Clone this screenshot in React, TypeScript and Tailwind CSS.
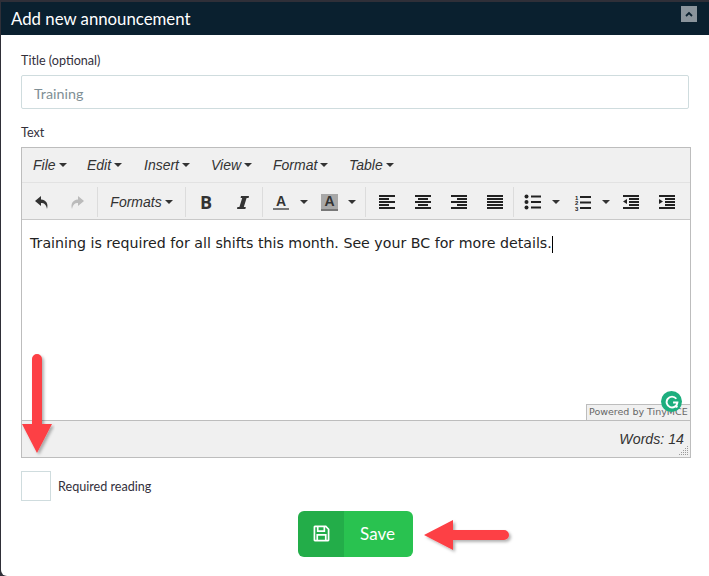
import React from "react";

const Caret = ({ className = "" }: { className?: string }) => (
  <span className={`inline-block w-0 h-0 border-l-[4px] border-r-[4px] border-t-[4px] border-l-transparent border-r-transparent border-t-[#333] ${className}`} />
);

const Lines = ({ rows }: { rows: [number, number][] }) => (
  <svg width="18" height="16" viewBox="0 0 18 16" fill="#222">
    {rows.map(([x, w], i) => (
      <rect key={i} x={x} y={1 + i * 3} width={w} height="2" />
    ))}
  </svg>
);

const Sep = () => <div className="w-px h-[30px] bg-[#dcdcdc]" />;

const menu: [string, string][] = [
  ["File", "w-[54px]"],
  ["Edit", "w-[57px]"],
  ["Insert", "w-[67px]"],
  ["View", "w-[62px]"],
  ["Format", "w-[76px]"],
  ["Table", "w-[60px]"],
];

export default function App() {
  return (
    <div className="relative w-[709px] h-[576px] overflow-hidden bg-[#2f2f38] pt-[2px] pl-px font-['Lato',sans-serif]">
      <div className="h-[33px] bg-[#0a202f] flex items-start justify-between pl-[10px] pr-[12px]">
        <span className="text-white text-[16.8px] leading-[34px]">Add new announcement</span>
        <div className="mt-[4px] w-4 h-4 bg-[#8a949c] flex items-center justify-center">
          <svg width="8" height="6" viewBox="0 0 8 6" fill="none" stroke="#0a202f" strokeWidth="1.8">
            <path d="M1 5l3-3 3 3" />
          </svg>
        </div>
      </div>

      <div className="h-[541px] bg-white rounded-bl-[6px] pl-5 pr-[18px] pt-[17px]">
        <div className="text-[12.6px] leading-[17px] text-[#33303c] h-[23px]">Title (optional)</div>
        <div className="w-[668px] h-[34px] border border-[#cfdcde] rounded-[2px] flex items-center pl-[12px] pt-[3px] text-[14.3px] text-[#7f8f96]">
          Training
        </div>
        <div className="mt-[15px] text-[12.6px] leading-[17px] h-[23px] text-[#33303c]">Text</div>

        <div className="w-[670px] h-[311px] border border-[#bdbdbd] flex flex-col font-['Liberation_Sans',sans-serif]">
          <div className="h-[35px] bg-[#f0f0f0] border-b border-[#e2e2e2] flex items-center pl-[11px] italic text-[14px] text-[#333]">
            {menu.map(([m, w]) => (
              <div key={m} className={`${w} flex items-center gap-[3px]`}>
                <span>{m}</span>
                <Caret />
              </div>
            ))}
          </div>

          <div className="h-[37px] bg-[#f0f0f0] border-b border-[#c9c9c9] flex items-center pt-[2px]">
            <div className="w-[37px] flex justify-center pl-[2px]">
              <svg width="16" height="15" viewBox="0 0 16 15" fill="#333">
                <path d="M7 1L1 6l6 5V8c3 0 5 1 6 6 1.500-5-.5-9-6-9.500z" />
              </svg>
            </div>
            <div className="w-[38px] flex justify-center pr-[2px]">
              <svg width="16" height="15" viewBox="0 0 16 15" fill="#bbb">
                <path d="M9 1l6 5-6 5V8c-3 0-5 1-6 6-1.500-5 .5-9 6-9.500z" />
              </svg>
            </div>
            <Sep />
            <div className="w-[87px] flex items-center justify-center gap-[3px] italic text-[14px] text-[#333]">
              <span>Formats</span>
              <Caret />
            </div>
            <Sep />
            <div className="w-[40px] text-center font-bold text-[18px] text-[#333] font-['Open_Sans',sans-serif]">B</div>
            <div className="w-[36px] flex justify-center pr-[2px]">
              <svg width="14" height="15" viewBox="0 0 14 15" fill="#333">
                <path d="M5 1h8l-.4 2h-2L7.800 12h2l-.4 2H1l.4-2h2L6.200 3h-1.600z" />
              </svg>
            </div>
            <Sep />
            <div className="w-[49px] flex items-center pl-[10px] gap-[11px]">
              <div className="w-4 text-center text-[14px] font-bold leading-[14px] text-[#333] border-b-[2px] border-[#777]">A</div>
              <Caret />
            </div>
            <div className="w-[53px] flex items-center pl-[9px] gap-[10px]">
              <div className="w-[17px] h-[17px] bg-[#a8a8a8] border-b-[2px] border-[#777] text-center text-[14px] font-bold leading-[15px] text-[#333]">A</div>
              <Caret />
            </div>
            <Sep />
            <div className="w-[36px] ml-[3px] flex justify-center"><Lines rows={[[1, 16], [1, 10], [1, 16], [1, 10], [1, 16]]} /></div>
            <div className="w-[36px] flex justify-center"><Lines rows={[[1, 16], [4, 10], [1, 16], [4, 10], [1, 16]]} /></div>
            <div className="w-[36px] flex justify-center"><Lines rows={[[1, 16], [7, 10], [1, 16], [7, 10], [1, 16]]} /></div>
            <div className="w-[36px] flex justify-center"><Lines rows={[[1, 16], [1, 16], [1, 16], [1, 16], [1, 16]]} /></div>
            <Sep />
            <div className="w-[50px] flex items-center pl-[10px] gap-[5px]">
              <svg width="18" height="16" viewBox="0 0 18 16" fill="#222">
                <circle cx="2.500" cy="2.500" r="2" /><circle cx="2.500" cy="8" r="2" /><circle cx="2.500" cy="13.500" r="2" />
                <rect x="7" y="1.500" width="10" height="2" /><rect x="7" y="7" width="10" height="2" /><rect x="7" y="12.500" width="10" height="2" />
              </svg>
              <Caret className="ml-[5px]" />
            </div>
            <div className="w-[49px] flex items-center pl-[10px] gap-[5px]">
              <svg width="18" height="17" viewBox="0 0 18 17" fill="#222">
                <text x="1" y="5.500" fontSize="6" fontWeight="bold" fontFamily="Liberation Sans">1</text>
                <text x="1" y="11" fontSize="6" fontWeight="bold" fontFamily="Liberation Sans">2</text>
                <text x="1" y="16.500" fontSize="6" fontWeight="bold" fontFamily="Liberation Sans">3</text>
                <rect x="6" y="2" width="11" height="2" /><rect x="6" y="7.500" width="11" height="2" /><rect x="6" y="13" width="11" height="2" />
              </svg>
              <Caret className="ml-[5px]" />
            </div>
            <div className="w-[36px] flex justify-center">
              <svg width="18" height="16" viewBox="0 0 18 16" fill="#222">
                <rect x="1" y="1" width="16" height="2" /><rect x="7" y="4" width="10" height="2" /><rect x="7" y="7" width="10" height="2" /><rect x="7" y="10" width="10" height="2" /><rect x="1" y="13" width="16" height="2" />
                <path d="M5 5v5L1 7.500z" />
              </svg>
            </div>
            <div className="w-[36px] flex justify-center">
              <svg width="18" height="16" viewBox="0 0 18 16" fill="#222">
                <rect x="1" y="1" width="16" height="2" /><rect x="7" y="4" width="10" height="2" /><rect x="7" y="7" width="10" height="2" /><rect x="7" y="10" width="10" height="2" /><rect x="1" y="13" width="16" height="2" />
                <path d="M1 5v5l4-2.500z" />
              </svg>
            </div>
          </div>

          <div className="relative flex-1 bg-white pl-2 pt-[13px] font-['DejaVu_Sans',sans-serif] text-[14.2px] leading-[20px] text-[#222] whitespace-nowrap">
            Training is required for all shifts this month. See your BC for more details.<span className="inline-block w-px h-[17px] bg-black align-middle" />
            <div className="absolute right-0 bottom-0 w-[104px] h-[16px] bg-[#f0f0f0] border-l border-t border-[#bdbdbd] pl-[2px] text-[9.5px] leading-[14px] text-[#666]">
              Powered by TinyMCE
            </div>
            <div className="absolute right-[8px] bottom-[8px] w-[21px] h-[21px] rounded-full bg-[#1dae7e] flex items-center justify-center">
              <svg width="14" height="14" viewBox="0 0 13 13" fill="none" stroke="white" strokeWidth="1.800">
                <path d="M10.500 3.500A5 5 0 1 0 11.500 7H7.500M9.500 9.500l2 2" />
              </svg>
            </div>
          </div>

          <div className="relative h-[37px] bg-[#f0f0f0] border-t border-[#bdbdbd] flex items-end justify-end pr-[6px] pb-[11px] italic text-[14.2px] leading-none text-[#333]">
            Words: 14
            <svg className="absolute right-[1px] bottom-[1px]" width="10" height="10" viewBox="0 0 10 10" fill="#9a9a9a">
              <rect x="8" y="0" width="1" height="1" /><rect x="6" y="2" width="1" height="1" /><rect x="8" y="2" width="1" height="1" />
              <rect x="4" y="4" width="1" height="1" /><rect x="6" y="4" width="1" height="1" /><rect x="8" y="4" width="1" height="1" />
              <rect x="2" y="6" width="1" height="1" /><rect x="4" y="6" width="1" height="1" /><rect x="6" y="6" width="1" height="1" /><rect x="8" y="6" width="1" height="1" />
              <rect x="0" y="8" width="1" height="1" /><rect x="2" y="8" width="1" height="1" /><rect x="4" y="8" width="1" height="1" /><rect x="6" y="8" width="1" height="1" /><rect x="8" y="8" width="1" height="1" />
            </svg>
          </div>
        </div>

        <div className="mt-[13px] flex items-center gap-[7px]">
          <div className="w-[30px] h-[30px] border border-[#cfdcde]" />
          <span className="text-[12.6px] pt-[3px] text-[#33303c]">Required reading</span>
        </div>

        <div className="mt-[10px] ml-[277px] w-[115px] h-[46px] rounded-[6px] overflow-hidden flex text-white">
          <div className="w-[46px] bg-[#23ad49] flex items-center justify-center pb-[2px]">
            <svg width="17" height="17" viewBox="0 0 18 18" fill="none" stroke="white" strokeWidth="1.800">
              <path d="M2 1.500h11.500l3 3V16a.5.5 0 0 1-.5.5H2a.5.5 0 0 1-.5-.5V2A.5.5 0 0 1 2 1.500z" />
              <path d="M5 1.500v5h7v-5M4.500 16.500v-6h9v6" />
            </svg>
          </div>
          <div className="flex-1 bg-[#29c250] flex items-center justify-center pr-[2px] text-[17px]">Save</div>
        </div>
      </div>

      <svg className="absolute left-[21px] top-[353px]" width="34" height="105" viewBox="0 0 34 105">
        <defs>
          <filter id="s" x="-30%" y="-30%" width="170%" height="170%">
            <feDropShadow dx="2" dy="2" stdDeviation="1.500" floodColor="#000" floodOpacity="0.3" />
          </filter>
        </defs>
        <path filter="url(#s)" fill="#fd3f45" d="M11 6a5 5 0 0 1 10 0v65h10L16 100 1 71h10z" />
      </svg>
      <svg className="absolute left-[421px] top-[516px]" width="94" height="48" viewBox="0 0 94 48">
        <path filter="url(#s)" fill="#fd3f45" d="M3 19L32 4v10h51a5 5 0 0 1 0 10H32v10z" />
      </svg>
    </div>
  );
}
